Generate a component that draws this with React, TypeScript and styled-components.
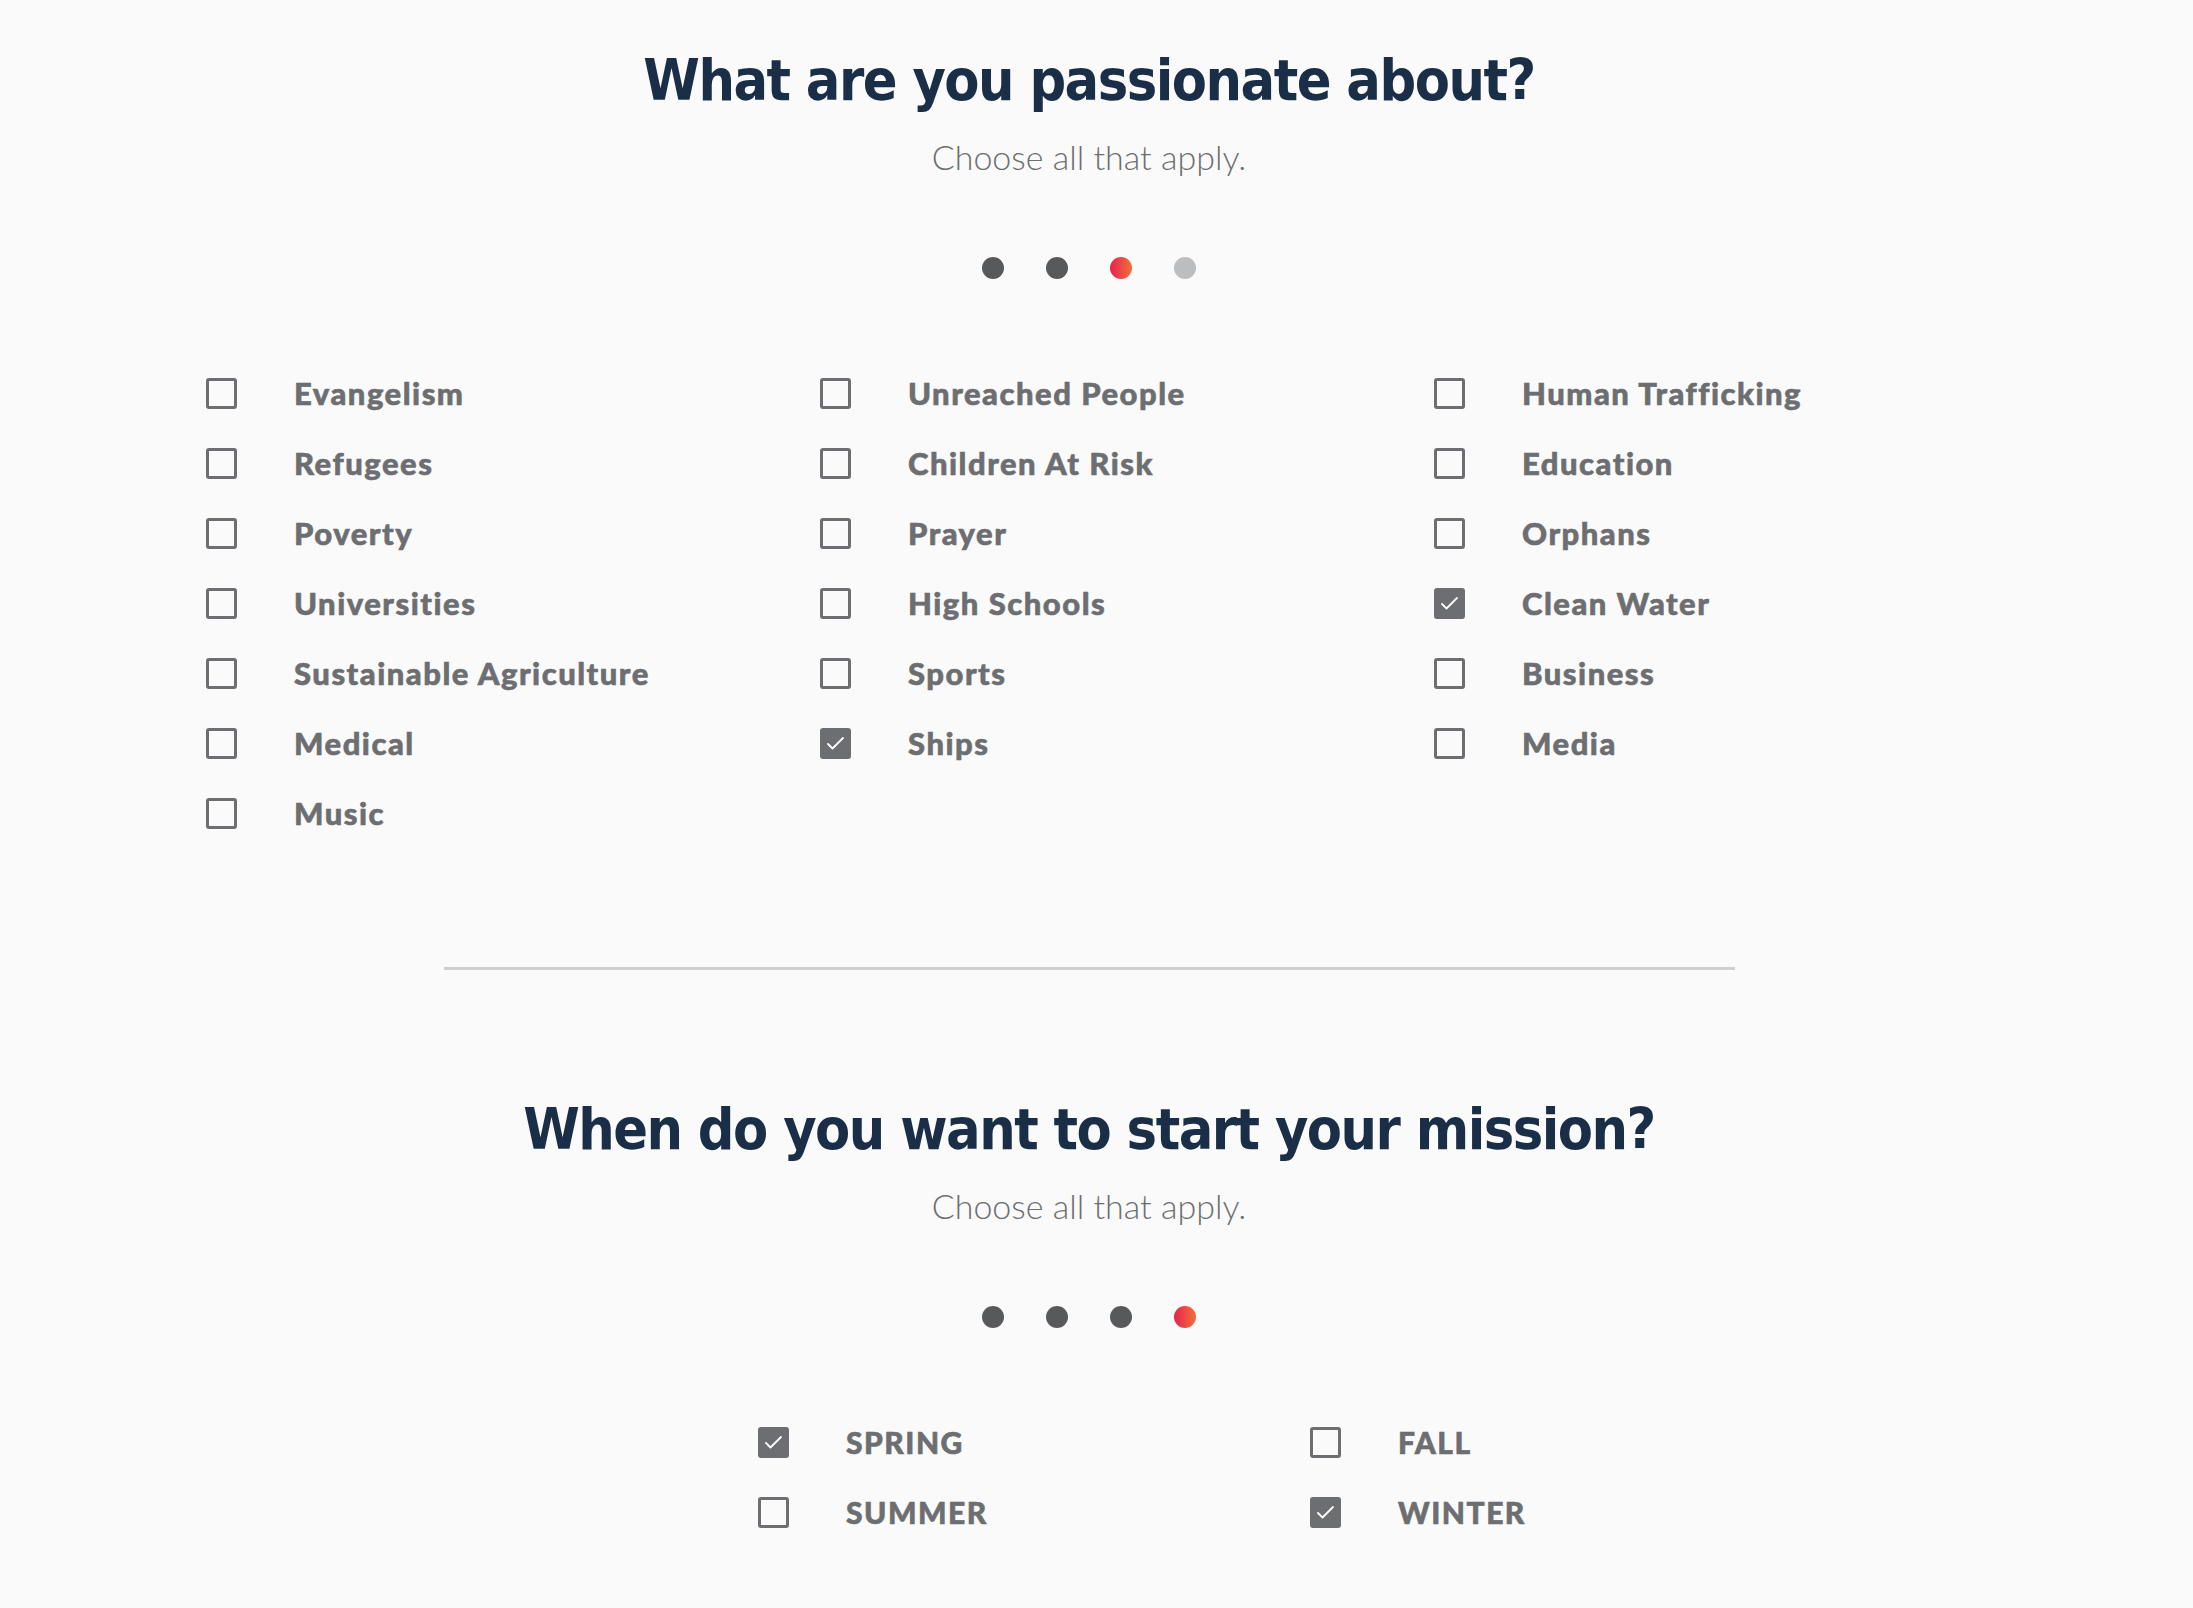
import React from "react";
import styled, { createGlobalStyle } from "styled-components";

const GlobalStyle = createGlobalStyle`
  html, body {
    margin: 0;
    padding: 0;
    background: #fafafa;
  }
  body {
    font-family: Lato, "Open Sans", sans-serif;
  }
`;

// the original page leaves room for a 15px scrollbar on the right
const Page = styled.main`
  width: 100%;
  min-height: 1608px;
  background: #fafafa;
  padding: 30px 15px 0 0;
  box-sizing: border-box;
`;

const Section = styled.section`
  display: flex;
  flex-direction: column;
  align-items: center;
`;

const Title = styled.h1`
  margin: 0;
  font-family: "DejaVu Sans Condensed", "DejaVu Sans", sans-serif;
  font-weight: 700;
  font-size: 57px;
  line-height: 100px;
  letter-spacing: -1.5px;
  color: #1b2e47;
`;

const Subtitle = styled.p`
  margin: 7px 0 0;
  font-family: Lato, sans-serif;
  font-weight: 300;
  font-size: 34px;
  line-height: 40px;
  color: #6d6e71;
`;

const Dots = styled.div`
  display: flex;
  gap: 42px;
  margin-top: 80px;
`;

type DotState = "done" | "active" | "todo";

const Dot = styled.span<{ $state: DotState }>`
  width: 22px;
  height: 22px;
  border-radius: 50%;
  background: ${(p) =>
    p.$state === "done"
      ? "#58595b"
      : p.$state === "active"
      ? "linear-gradient(to right, #e8234f, #f26f3a)"
      : "#bcbdbf"};
`;

const Grid = styled.div<{ $cols: number; $width: number; $left: number }>`
  align-self: stretch;
  display: grid;
  grid-template-columns: repeat(${(p) => p.$cols}, ${(p) => p.$width}px);
  padding-left: ${(p) => p.$left}px;
  margin-top: 79px;
`;

const Column = styled.div`
  display: flex;
  flex-direction: column;
`;

const Option = styled.label<{ $caps?: boolean }>`
  display: flex;
  align-items: center;
  height: 70px;
  gap: 57px;
  font-family: Lato, sans-serif;
  font-weight: 900;
  font-size: ${(p) => (p.$caps ? "30px" : "31px")};
  color: #6d6e71;
  -webkit-text-stroke: 0.6px #6d6e71;
  text-transform: ${(p) => (p.$caps ? "uppercase" : "none")};
  letter-spacing: 1.5px;
  cursor: pointer;
`;

const Box = styled.span<{ $checked: boolean }>`
  flex: none;
  width: 31px;
  height: 31px;
  box-sizing: border-box;
  border: 3px solid #6d6e71;
  border-radius: 3px;
  background: ${(p) => (p.$checked ? "#6d6e71" : "transparent")};
  display: flex;
  align-items: center;
  justify-content: center;
`;

const Divider = styled.hr`
  width: 1291px;
  height: 3px;
  border: 0;
  margin: 119px auto 0;
  background: #cfcfd0;
`;

const SecondSection = styled(Section)`
  margin-top: 109px;
`;

const Check = () => (
  <svg width="19" height="15" viewBox="0 0 19 15" fill="none">
    <path d="M2 8 L6.5 12.5 L17 2" stroke="#fff" strokeWidth="1.8" strokeLinecap="round" strokeLinejoin="round" />
  </svg>
);

type Item = { label: string; checked?: boolean };

const CheckOption = ({ item, caps }: { item: Item; caps?: boolean }) => (
  <Option $caps={caps}>
    <Box $checked={!!item.checked}>{item.checked && <Check />}</Box>
    {item.label}
  </Option>
);

const passions: Item[][] = [
  [
    { label: "Evangelism" },
    { label: "Refugees" },
    { label: "Poverty" },
    { label: "Universities" },
    { label: "Sustainable Agriculture" },
    { label: "Medical" },
    { label: "Music" },
  ],
  [
    { label: "Unreached People" },
    { label: "Children At Risk" },
    { label: "Prayer" },
    { label: "High Schools" },
    { label: "Sports" },
    { label: "Ships", checked: true },
  ],
  [
    { label: "Human Trafficking" },
    { label: "Education" },
    { label: "Orphans" },
    { label: "Clean Water", checked: true },
    { label: "Business" },
    { label: "Media" },
  ],
];

const seasons: Item[][] = [
  [{ label: "Spring", checked: true }, { label: "Summer" }],
  [{ label: "Fall" }, { label: "Winter", checked: true }],
];

const Steps = ({ states }: { states: DotState[] }) => (
  <Dots>
    {states.map((s, i) => (
      <Dot key={i} $state={s} />
    ))}
  </Dots>
);

export default function App() {
  return (
    <Page>
      <GlobalStyle />
      <Section>
        <Title>What are you passionate about?</Title>
        <Subtitle>Choose all that apply.</Subtitle>
        <Steps states={["done", "done", "active", "todo"]} />
        <Grid $cols={3} $width={614} $left={206}>
          {passions.map((col, i) => (
            <Column key={i}>
              {col.map((item) => (
                <CheckOption key={item.label} item={item} />
              ))}
            </Column>
          ))}
        </Grid>
      </Section>
      <Divider />
      <SecondSection>
        <Title>When do you want to start your mission?</Title>
        <Subtitle>Choose all that apply.</Subtitle>
        <Steps states={["done", "done", "done", "active"]} />
        <Grid $cols={2} $width={552} $left={758}>
          {seasons.map((col, i) => (
            <Column key={i}>
              {col.map((item) => (
                <CheckOption key={item.label} item={item} caps />
              ))}
            </Column>
          ))}
        </Grid>
      </SecondSection>
    </Page>
  );
}
